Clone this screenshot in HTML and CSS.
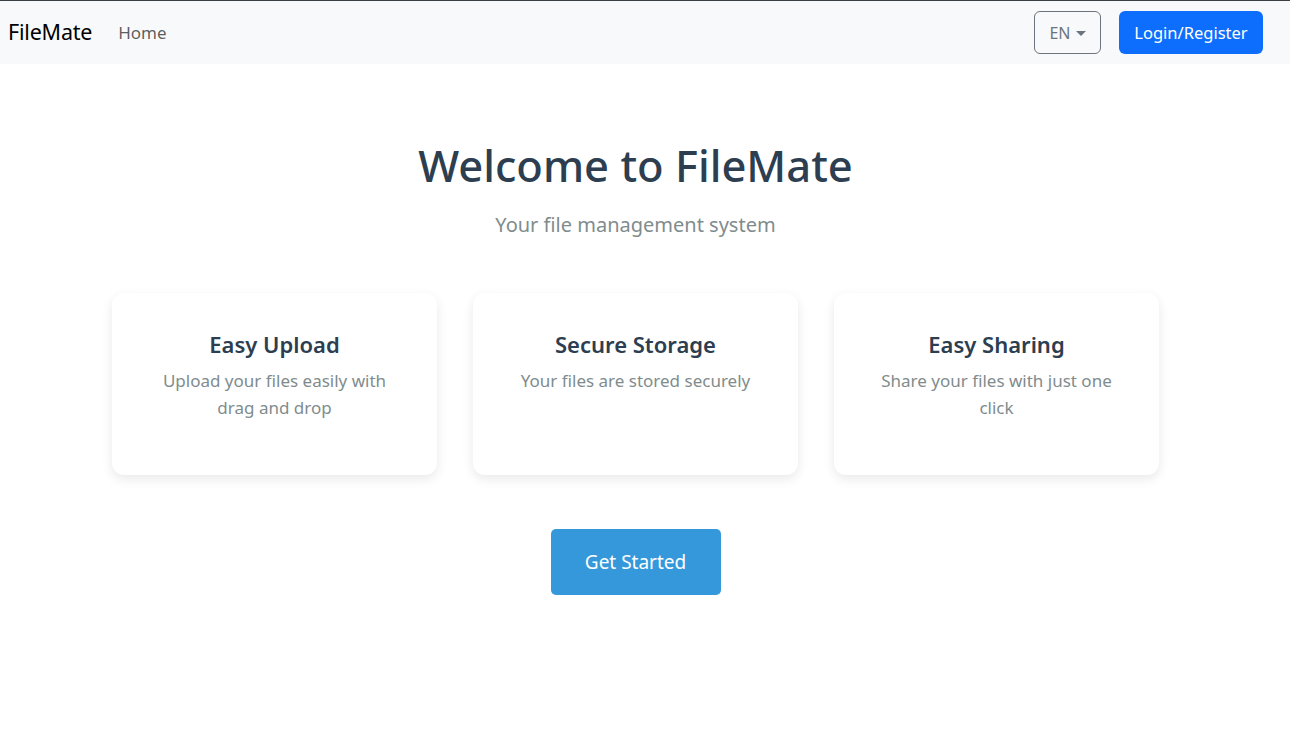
FILE: index.html
```html
<!DOCTYPE html>
<html lang="en">
<head>
<meta charset="utf-8">
<title>FileMate</title>
<link rel="stylesheet" href="styles.css">
</head>
<body>
<nav class="navbar">
  <div class="nav-left">
    <a class="brand" href="#">FileMate</a>
    <a class="nav-link" href="#">Home</a>
  </div>
  <div class="nav-right">
    <button class="lang-btn">EN <span class="caret"></span></button>
    <button class="login-btn">Login/Register</button>
  </div>
</nav>
<main class="hero">
  <h1 class="hero-title">Welcome to FileMate</h1>
  <p class="hero-sub">Your file management system</p>
  <section class="features">
    <div class="card">
      <h3 class="card-title">Easy Upload</h3>
      <p class="card-text">Upload your files easily with drag and drop</p>
    </div>
    <div class="card">
      <h3 class="card-title">Secure Storage</h3>
      <p class="card-text">Your files are stored securely</p>
    </div>
    <div class="card">
      <h3 class="card-title">Easy Sharing</h3>
      <p class="card-text">Share your files with just one click</p>
    </div>
  </section>
  <a class="cta" href="#">Get Started</a>
</main>
</body>
</html>
```

FILE: styles.css
```css
* { box-sizing: border-box; }
html, body { margin: 0; padding: 0; }
body {
  font-family: "Noto Sans", "Open Sans", "Liberation Sans", sans-serif;
  background: #fff;
  color: #212529;
  font-size: 16px;
  line-height: 1.5;
}
.navbar {
  border-top: 1px solid #3a3f44;
  background: #f8f9fa;
  height: 64px;
  display: flex;
  align-items: center;
  justify-content: space-between;
  padding: 0 27px 0 8px;
}
.nav-left { display: flex; align-items: center; gap: 26px; }
.brand {
  font-size: 21.5px;
  color: #000;
  text-decoration: none;
  letter-spacing: -0.2px;
}
.nav-link {
  font-size: 17px;
  color: rgba(0,0,0,0.65);
  text-decoration: none;
}
.nav-right { display: flex; align-items: center; gap: 18px; }
.lang-btn {
  font-family: inherit;
  font-size: 16px;
  height: 43px;
  width: 67px;
  border: 1px solid #6c757d;
  border-radius: 6px;
  background: transparent;
  color: #6c757d;
  display: flex;
  align-items: center;
  justify-content: center;
  gap: 5px;
  padding: 0;
}
.caret {
  width: 0; height: 0;
  border-left: 5px solid transparent;
  border-right: 5px solid transparent;
  border-top: 5px solid #6c757d;
  margin-top: 1px;
}
.login-btn {
  font-family: inherit;
  font-size: 16.5px;
  height: 43px;
  width: 144px;
  border: none;
  border-radius: 6px;
  background: #0d6efd;
  color: #fff;
  padding: 0;
}
.hero {
  display: flex;
  flex-direction: column;
  align-items: center;
  text-align: center;
  padding: 72px 19px 0 0;
}
.hero-title {
  margin: 0;
  font-size: 43.5px;
  font-weight: 500;
  line-height: 58px;
  color: #2c3e50;
}
.hero-sub {
  margin: 16px 0 0;
  font-size: 20px;
  line-height: 30px;
  color: #7f8c8d;
}
.features {
  margin-top: 53px;
  display: grid;
  grid-template-columns: repeat(3, 325px);
  gap: 36px;
}
.card {
  background: #fff;
  border-radius: 12px;
  box-shadow: 0 4px 12px rgba(0,0,0,0.09);
  padding: 36px 40px 32px;
  height: 182px;
}
.card-title {
  margin: 0 0 8px;
  font-size: 22px;
  font-weight: 600;
  line-height: 30px;
  color: #2c3e50;
}
.card-text {
  margin: 0;
  font-size: 17px;
  line-height: 27px;
  color: #7f8c8d;
}
.cta {
  margin-top: 54px;
  display: inline-block;
  width: 170px;
  height: 66px;
  line-height: 66px;
  background: #3498db;
  color: #fff;
  font-size: 19px;
  text-decoration: none;
  border-radius: 5px;
}
```
